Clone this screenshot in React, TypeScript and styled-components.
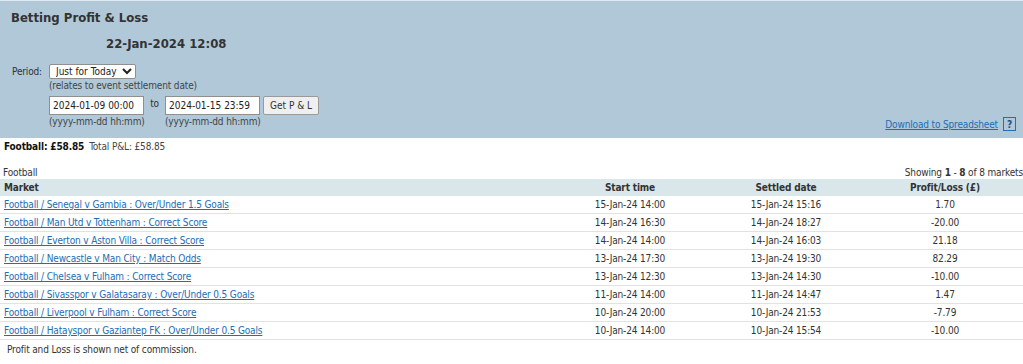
import React from 'react';
import styled, { createGlobalStyle } from 'styled-components';

const GlobalStyle = createGlobalStyle`
  body {
    margin: 0;
    background: #ffffff;
    font-family: "DejaVu Sans Condensed", "DejaVu Sans", sans-serif;
    font-size: 10px;
    letter-spacing: -0.15px;
    color: #333333;
  }
`;

const Page = styled.div`
  width: 1023px;
  overflow: hidden;
`;

const HeaderPanel = styled.div`
  background: #b0c8d8;
  border-top: 1px solid #dfe8ee;
  height: 138px;
  padding: 0 7px 0 11px;
  box-sizing: border-box;
  display: flex;
  flex-direction: column;
`;

const Title = styled.div`
  font-size: 13px;
  font-weight: bold;
  letter-spacing: 0;
  margin-top: 9px;
  height: 16px;
`;

const DateLine = styled.div`
  font-size: 13px;
  font-weight: bold;
  letter-spacing: 0;
  padding-left: 95px;
  margin-top: 10px;
  height: 17px;
`;

const FormGrid = styled.div`
  display: grid;
  grid-template-columns: 38px auto;
  margin-top: 11px;
`;

const Label = styled.div`
  padding-top: 2px;
  padding-left: 1px;
`;

const Controls = styled.div`
  display: flex;
  flex-direction: column;
`;

const Select = styled.select`
  width: 87px;
  height: 15px;
  font: inherit;
  font-size: 10px;
  padding: 0 0 0 2px;
  border: 1px solid #8f8f8f;
  border-radius: 2px;
  background: #ffffff;
  color: #222;
`;

const Hint = styled.div`
  color: #444;
  height: 14px;
  line-height: 14px;
`;

const DateRow = styled.div`
  display: flex;
  align-items: flex-start;
  margin-top: 3px;
`;

const DateField = styled.div`
  display: flex;
  flex-direction: column;
  width: 95px;
  white-space: nowrap;
`;

const Input = styled.input`
  width: 95px;
  height: 19px;
  box-sizing: border-box;
  font: inherit;
  font-size: 10px;
  padding: 0 3px;
  border: 1px solid #8f8f8f;
  background: #ffffff;
  color: #222;
`;

const ToText = styled.span`
  width: 21px;
  text-align: center;
  padding-top: 2px;
`;

const Button = styled.button`
  height: 19px;
  margin-left: 3px;
  padding: 0 6px;
  font: inherit;
  font-size: 10px;
  color: #333;
  background: #efefef;
  border: 1px solid #9a9a9a;
  border-radius: 2px;
`;

const DownloadRow = styled.div`
  display: flex;
  justify-content: flex-end;
  align-items: center;
  gap: 5px;
  margin-top: -12px;
`;

const Link = styled.a`
  color: #246cb4;
  text-decoration: underline;
  cursor: pointer;
`;

const HelpBox = styled.span`
  display: inline-flex;
  align-items: center;
  justify-content: center;
  width: 11px;
  height: 12px;
  border: 1px solid #2a6db0;
  color: #1d4f86;
  font-weight: bold;
  font-size: 10px;
`;

const Summary = styled.div`
  padding: 3px 4px;
  height: 14px;
`;

const Strong = styled.span`
  font-weight: bold;
  color: #111;
  margin-right: 5px;
`;

const Muted = styled.span`
  color: #444;
`;

const TableCaption = styled.div`
  display: flex;
  justify-content: space-between;
  margin-top: 9px;
  padding: 0 0 0 3px;
  height: 12px;
  white-space: nowrap;
`;

const Table = styled.table`
  width: 1023px;
  border-collapse: collapse;
`;

const Th = styled.th<{ $align?: string; $w?: number }>`
  box-sizing: border-box;
  background: #d9e6ea;
  font-weight: bold;
  color: #333;
  height: 17px;
  padding: 0 4px;
  text-align: ${(p) => p.$align || 'center'};
  width: ${(p) => (p.$w ? `${p.$w}px` : 'auto')};
`;

const Td = styled.td<{ $align?: string }>`
  height: 17px;
  padding: 0 4px;
  border-bottom: 1px solid #e2e2e2;
  text-align: ${(p) => p.$align || 'center'};
`;

const Footer = styled.div`
  padding: 4px 7px;
`;

const rows = [
  ['Football / Senegal v Gambia : Over/Under 1.5 Goals', '15-Jan-24 14:00', '15-Jan-24 15:16', '1.70'],
  ['Football / Man Utd v Tottenham : Correct Score', '14-Jan-24 16:30', '14-Jan-24 18:27', '-20.00'],
  ['Football / Everton v Aston Villa : Correct Score', '14-Jan-24 14:00', '14-Jan-24 16:03', '21.18'],
  ['Football / Newcastle v Man City : Match Odds', '13-Jan-24 17:30', '13-Jan-24 19:30', '82.29'],
  ['Football / Chelsea v Fulham : Correct Score', '13-Jan-24 12:30', '13-Jan-24 14:30', '-10.00'],
  ['Football / Sivasspor v Galatasaray : Over/Under 0.5 Goals', '11-Jan-24 14:00', '11-Jan-24 14:47', '1.47'],
  ['Football / Liverpool v Fulham : Correct Score', '10-Jan-24 20:00', '10-Jan-24 21:53', '-7.79'],
  ['Football / Hatayspor v Gaziantep FK : Over/Under 0.5 Goals', '10-Jan-24 14:00', '10-Jan-24 15:54', '-10.00'],
];

export default function App() {
  return (
    <Page>
      <GlobalStyle />
      <HeaderPanel>
        <Title>Betting Profit &amp; Loss</Title>
        <DateLine>22-Jan-2024 12:08</DateLine>
        <FormGrid>
          <Label>Period:</Label>
          <Controls>
            <Select defaultValue="today">
              <option value="today">Just for Today</option>
            </Select>
            <Hint>(relates to event settlement date)</Hint>
            <DateRow>
              <DateField>
                <Input defaultValue="2024-01-09 00:00" />
                <Hint>(yyyy-mm-dd hh:mm)</Hint>
              </DateField>
              <ToText>to</ToText>
              <DateField>
                <Input defaultValue="2024-01-15 23:59" />
                <Hint>(yyyy-mm-dd hh:mm)</Hint>
              </DateField>
              <Button>Get P &amp; L</Button>
            </DateRow>
          </Controls>
        </FormGrid>
        <DownloadRow>
          <Link>Download to Spreadsheet</Link>
          <HelpBox>?</HelpBox>
        </DownloadRow>
      </HeaderPanel>
      <Summary>
        <Strong>Football: £58.85</Strong>
        <Muted>Total P&amp;L: £58.85</Muted>
      </Summary>
      <TableCaption>
        <span>Football</span>
        <span>
          Showing <b>1</b> - <b>8</b> of 8 markets
        </span>
      </TableCaption>
      <Table>
        <thead>
          <tr>
            <Th $align="left">Market</Th>
            <Th $w={150}>Start time</Th>
            <Th $w={162}>Settled date</Th>
            <Th $w={156}>Profit/Loss (£)</Th>
          </tr>
        </thead>
        <tbody>
          {rows.map((r) => (
            <tr key={r[0]}>
              <Td $align="left">
                <Link>{r[0]}</Link>
              </Td>
              <Td>{r[1]}</Td>
              <Td>{r[2]}</Td>
              <Td>{r[3]}</Td>
            </tr>
          ))}
        </tbody>
      </Table>
      <Footer>Profit and Loss is shown net of commission.</Footer>
    </Page>
  );
}
